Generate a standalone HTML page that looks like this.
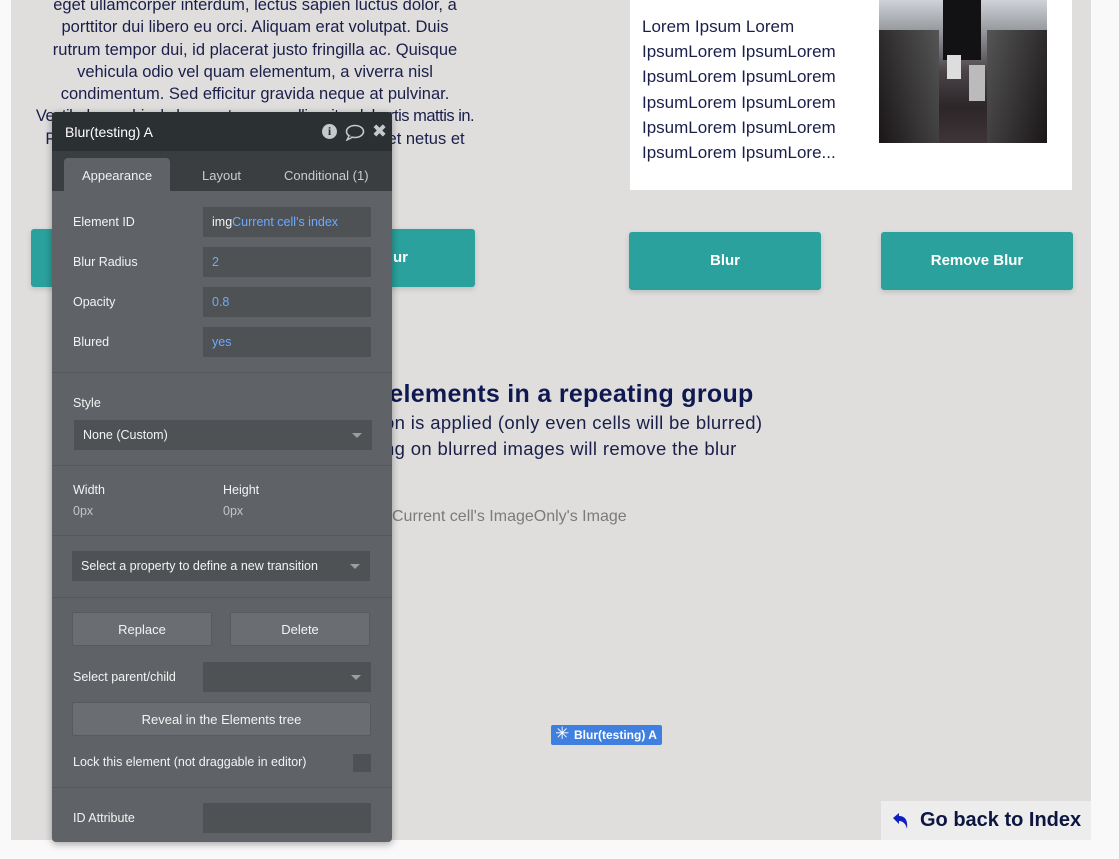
<!DOCTYPE html>
<html><head><style>
*{margin:0;padding:0;box-sizing:border-box}
body{width:1119px;height:859px;background:#f9f9f9;position:relative;overflow:hidden;font-family:"Liberation Sans","DejaVu Sans",sans-serif}
.a{position:absolute}
.canvas{left:11px;top:0;width:1080px;height:840px;background:#dfdedd}
.ptxt{left:5px;width:500px;text-align:center;color:#1a1f4a;font-size:16.5px;line-height:22.3px;white-space:nowrap}
.btn{background:#2aa19d;color:#fff;font-weight:bold;font-size:15px;border-radius:3px;text-align:center;box-shadow:0 2px 6px rgba(0,0,0,.15)}
.panel{left:52px;top:112px;width:340px;height:730px;background:#5f6367;border-radius:4px;box-shadow:0 2px 8px rgba(0,0,0,.35);color:#eef0f2;font-size:12.5px;overflow:hidden}
.lbl{font-size:12.5px;color:#f3f3f3}
.inp{background:#4e5255;color:#6fa8ff;font-size:12.5px;padding-left:9px;line-height:30px;height:30px}
.sep{left:0;width:340px;height:1px;background:#55595c}
.pbtn{background:#6a6e72;border:1px solid #575b5e;color:#f3f3f3;text-align:center;font-size:13px;line-height:32px;height:34px;border-radius:2px}
.caret{width:0;height:0;border-left:5px solid transparent;border-right:5px solid transparent;border-top:5px solid #9a9ea1}
</style></head><body>
<div class="a canvas"></div>
<div class="a ptxt" style="top:-6px">eget ullamcorper interdum, lectus sapien luctus dolor, a<br>porttitor dui libero eu orci. Aliquam erat volutpat. Duis<br>rutrum tempor dui, id placerat justo fringilla ac. Quisque<br>vehicula odio vel quam elementum, a viverra nisl<br>condimentum. Sed efficitur gravida neque at pulvinar.<br><span style="letter-spacing:-0.5px">Vestibulum vehicula lorem et ex convallis, vitae lobortis mattis in.</span><br>Pellentesque habitant morbi tristique senectus et netus et</div>
<div class="a btn" style="left:31px;top:229px;width:444px;height:58px;line-height:58px;padding-left:280px">Blur</div>
<div class="a" style="left:630px;top:0;width:442px;height:190px;background:#fff"></div>
<div class="a" style="left:642px;top:14px;color:#1a1f4a;font-size:17px;line-height:25.2px">Lorem Ipsum Lorem<br>IpsumLorem IpsumLorem<br>IpsumLorem IpsumLorem<br>IpsumLorem IpsumLorem<br>IpsumLorem IpsumLorem<br>IpsumLorem IpsumLore...</div>
<div class="a" style="left:879px;top:0;width:168px;height:143px;background:linear-gradient(180deg,#cfd3d8 0%,#8d8f94 25%,#4a4449 50%,#2c2629 75%,#3e3538 100%)">
<div class="a" style="left:0;top:30px;width:60px;height:113px;background:linear-gradient(75deg,#1a1618,#555)"></div>
<div class="a" style="left:108px;top:30px;width:60px;height:113px;background:linear-gradient(-75deg,#1a1618,#555)"></div>
<div class="a" style="left:64px;top:0;width:38px;height:60px;background:#121214"></div>
<div class="a" style="left:68px;top:55px;width:14px;height:24px;background:#ddd"></div>
<div class="a" style="left:90px;top:65px;width:16px;height:36px;background:#bbb"></div>
</div>
<div class="a btn" style="left:629px;top:232px;width:192px;height:58px;line-height:58px">Blur</div>
<div class="a btn" style="left:881px;top:232px;width:192px;height:58px;line-height:58px">Remove Blur</div>
<div class="a" style="left:372px;top:380px;color:#0f1850;font-weight:bold;font-size:25px;letter-spacing:0.3px;white-space:nowrap">r elements in a repeating group</div>
<div class="a" style="left:374px;top:410px;color:#1a1f4a;font-size:18.5px;line-height:26px;letter-spacing:0.35px;white-space:nowrap">tion is applied (only even cells will be blurred)<br>ting on blurred images will remove the blur</div>
<div class="a" style="left:392px;top:508px;color:#7b7b7b;font-size:16px">Current cell's ImageOnly's Image</div>
<div class="a" style="left:551px;top:725px;width:111px;height:20px;background:#3f7fe0;border-radius:2px;color:#fff;font-size:12px;font-weight:bold;line-height:20px;padding-left:23px">Blur(testing) A<span class="a" style="left:4px;top:-1px;font-size:17px">✳</span></div>
<div class="a" style="left:881px;top:801px;width:210px;height:39px;background:#ededed;color:#0d1640;font-weight:bold;font-size:20px;line-height:39px;padding-left:39px;white-space:nowrap">Go back to Index
<svg class="a" style="left:10px;top:10px" width="20" height="20" viewBox="0 0 20 20"><path d="M2 7 L8 2 L8 5 C14 5 17 9 16 18 C15 13 12 10 8 10 L8 13 Z" fill="#1020c0"/></svg></div>

<div class="a panel">
<div class="a" style="left:0;top:0;width:340px;height:39px;background:#2b3032"></div>
<div class="a" style="left:13px;top:12px;font-size:14px;color:#fff">Blur(testing) A</div>
<div class="a" style="left:270px;top:12px;width:15px;height:15px;border-radius:50%;background:#c7cacc;color:#2b3032;font-weight:bold;font-size:12px;text-align:center;line-height:15px;font-family:'Liberation Serif',serif">i</div>
<svg class="a" style="left:293px;top:12px" width="20" height="17" viewBox="0 0 20 17"><ellipse cx="10" cy="7.5" rx="8.5" ry="6" fill="none" stroke="#c7cacc" stroke-width="1.6"/><path d="M4 12 L2 16 L8 13" fill="#2b3032" stroke="#c7cacc" stroke-width="1.4"/></svg>
<div class="a" style="left:320px;top:9px;font-size:18px;font-weight:bold;color:#c7cacc">✖</div>
<div class="a" style="left:0;top:39px;width:340px;height:40px;background:#3a3e41"></div>
<div class="a" style="left:12px;top:46px;width:106px;height:33px;background:#5f6367;border-radius:4px 4px 0 0;text-align:center;line-height:35px;font-size:13px">Appearance</div>
<div class="a" style="left:150px;top:46px;line-height:35px;font-size:13px;color:#c9ccce">Layout</div>
<div class="a" style="left:232px;top:46px;line-height:35px;font-size:13px;color:#c9ccce">Conditional (1)</div>

<div class="a lbl" style="left:21px;top:103px">Element ID</div>
<div class="a inp" style="left:151px;top:95px;width:168px"><span style="color:#f3f3f3">img</span>Current cell's index</div>
<div class="a lbl" style="left:21px;top:143px">Blur Radius</div>
<div class="a inp" style="left:151px;top:135px;width:168px">2</div>
<div class="a lbl" style="left:21px;top:183px">Opacity</div>
<div class="a inp" style="left:151px;top:175px;width:168px">0.8</div>
<div class="a lbl" style="left:21px;top:223px">Blured</div>
<div class="a inp" style="left:151px;top:215px;width:168px">yes</div>
<div class="a sep" style="top:260px"></div>
<div class="a lbl" style="left:21px;top:284px">Style</div>
<div class="a inp" style="left:22px;top:308px;width:298px;color:#f3f3f3;line-height:31px">None (Custom)<div class="a caret" style="right:10px;top:13px"></div></div>
<div class="a sep" style="top:353px"></div>
<div class="a lbl" style="left:21px;top:371px">Width</div>
<div class="a lbl" style="left:171px;top:371px">Height</div>
<div class="a" style="left:21px;top:392px;color:#c3c6c8">0px</div>
<div class="a" style="left:171px;top:392px;color:#c3c6c8">0px</div>
<div class="a sep" style="top:423px"></div>
<div class="a inp" style="left:20px;top:439px;width:298px;color:#f3f3f3;line-height:31px">Select a property to define a new transition<div class="a caret" style="right:10px;top:13px"></div></div>
<div class="a sep" style="top:485px"></div>
<div class="a pbtn" style="left:20px;top:500px;width:140px;line-height:34px">Replace</div>
<div class="a pbtn" style="left:178px;top:500px;width:140px;line-height:34px">Delete</div>
<div class="a lbl" style="left:21px;top:558px">Select parent/child</div>
<div class="a inp" style="left:151px;top:550px;width:168px"><div class="a caret" style="right:10px;top:13px"></div></div>
<div class="a pbtn" style="left:20px;top:590px;width:299px;line-height:34px">Reveal in the Elements tree</div>
<div class="a lbl" style="left:21px;top:643px">Lock this element (not draggable in editor)</div>
<div class="a" style="left:301px;top:642px;width:18px;height:18px;background:#4e5255"></div>
<div class="a sep" style="top:675px"></div>
<div class="a lbl" style="left:21px;top:699px">ID Attribute</div>
<div class="a inp" style="left:151px;top:691px;width:168px"></div>
</div>
</body></html>
